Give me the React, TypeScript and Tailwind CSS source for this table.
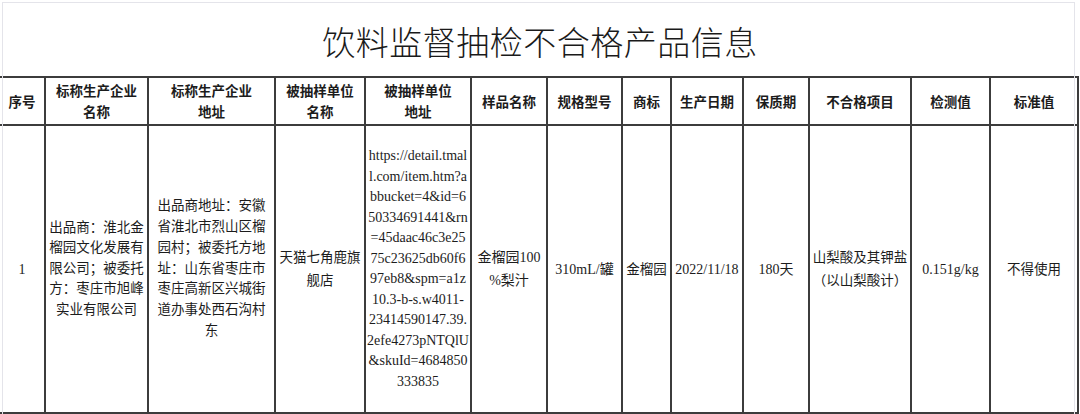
import React from "react";

const serif = { fontFamily: '"Liberation Serif", "Noto Sans CJK SC", serif' };

const headers: string[][] = [
  ["序号"],
  ["标称生产企业", "名称"],
  ["标称生产企业", "地址"],
  ["被抽样单位", "名称"],
  ["被抽样单位", "地址"],
  ["样品名称"],
  ["规格型号"],
  ["商标"],
  ["生产日期"],
  ["保质期"],
  ["不合格项目"],
  ["检测值"],
  ["标准值"],
];

const urlLines = [
  "https://detail.tmal",
  "l.com/item.htm?a",
  "bbucket=4&id=6",
  "50334691441&rn",
  "=45daac46c3e25",
  "75c23625db60f6",
  "97eb8&spm=a1z",
  "10.3-b-s.w4011-",
  "23414590147.39.",
  "2efe4273pNTQlU",
  "&skuId=4684850",
  "333835",
];

function Lines({ lines, lh }: { lines: string[]; lh: string }) {
  return (
    <div className={`flex flex-col items-center ${lh}`}>
      {lines.map((l, i) => (
        <div key={i} className="whitespace-nowrap">
          {l}
        </div>
      ))}
    </div>
  );
}

export default function App() {
  const body: { lines: string[]; lh: string; size?: string }[] = [
    { lines: ["1"], lh: "leading-[21px]", size: "text-[14px]" },
    {
      lines: ["出品商：淮北金", "榴园文化发展有", "限公司；被委托", "方：枣庄市旭峰", "实业有限公司"],
      lh: "leading-[20.5px]",
    },
    {
      lines: [
        "出品商地址：安徽",
        "省淮北市烈山区榴",
        "园村；被委托方地",
        "址：山东省枣庄市",
        "枣庄高新区兴城街",
        "道办事处西石沟村",
        "东",
      ],
      lh: "leading-[20.8px]",
    },
    { lines: ["天猫七角鹿旗", "舰店"], lh: "leading-[23px]" },
    { lines: urlLines, lh: "leading-[20.5px]", size: "text-[14px]" },
    { lines: ["金榴园100", "%梨汁"], lh: "leading-[23px]", size: "text-[14px]" },
    { lines: ["310mL/罐"], lh: "leading-[21px]", size: "text-[14px]" },
    { lines: ["金榴园"], lh: "leading-[21px]" },
    { lines: ["2022/11/18"], lh: "leading-[21px]", size: "text-[14px]" },
    { lines: ["180天"], lh: "leading-[21px]", size: "text-[14px]" },
    { lines: ["山梨酸及其钾盐", "（以山梨酸计）"], lh: "leading-[23px]" },
    { lines: ["0.151g/kg"], lh: "leading-[21px]", size: "text-[14px]" },
    { lines: ["不得使用"], lh: "leading-[21px]" },
  ];

  return (
    <div className="relative w-[1080px] h-[414px] overflow-hidden bg-white text-[#1c1c1c]">
      <div className="pointer-events-none absolute left-[2px] top-[2px] right-[5px] bottom-0 border-l border-t border-r border-[#e4e4ea]" />
      <div
        className="flex h-[76px] items-center justify-center pt-[8px] text-[33px] tracking-[0.5px] text-[#1a1a1a]"
        style={{ fontFamily: '"Noto Sans CJK SC", sans-serif', fontWeight: 300 }}
      >
        饮料监督抽检不合格产品信息
      </div>
      <div className="w-[1079px] border-t-2 border-[#3c3c3c]">
        <div
          className="grid grid-cols-[46px_103px_127px_90px_106px_76px_75px_49px_72px_66px_102px_79px_88px] border-b-2 border-[#3c3c3c]"
          style={{ fontFamily: '"Noto Sans CJK SC", sans-serif' }}
        >
          {headers.map((h, i) => (
            <div
              key={i}
              className="flex h-[46px] items-center justify-center border-r-2 border-[#3c3c3c] text-[13.5px] font-bold leading-[21px]"
            >
              <Lines lines={h} lh="leading-[21px]" />
            </div>
          ))}
        </div>
        <div
          className="grid grid-cols-[46px_103px_127px_90px_106px_76px_75px_49px_72px_66px_102px_79px_88px] border-b-2 border-[#3c3c3c]"
          style={serif}
        >
          {body.map((c, i) => (
            <div
              key={i}
              className={`flex h-[286px] items-center justify-center border-r-2 border-[#3c3c3c] ${c.size ?? "text-[13.5px]"}`}
            >
              <Lines lines={c.lines} lh={c.lh} />
            </div>
          ))}
        </div>
      </div>
    </div>
  );
}
